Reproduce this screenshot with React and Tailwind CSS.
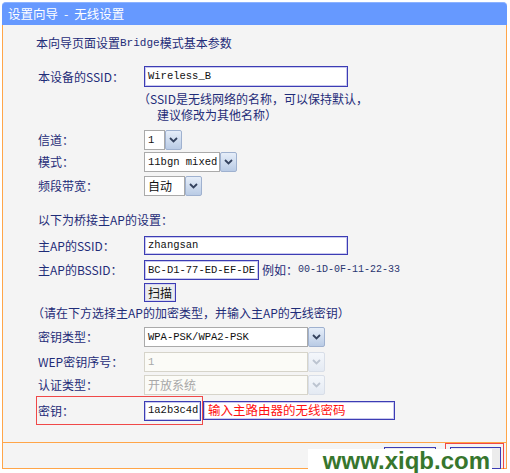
const CJK = "font-['Noto_Sans_CJK_SC',sans-serif]";
const MONO = "font-['Liberation_Mono','Noto_Sans_CJK_SC',monospace]";
const LBL = "w-[106px] shrink-0";

function Chevron({ disabled }) {
  return (
    <svg width="9" height="6" viewBox="0 0 9 6">
      <polyline
        points="1,1 4.5,4.5 8,1"
        fill="none"
        stroke={disabled ? "#bcc4d0" : "#34425e"}
        strokeWidth="1.8"
      />
    </svg>
  );
}

function Select({ className, value, disabled, mono }) {
  return (
    <div className={`flex h-[20px] ${className}`}>
      <div
        className={`flex-1 flex items-center pl-[3px] border ${
          disabled
            ? "border-[#d6d4ca] bg-[#fbfbf7] text-[#a8a8a8]"
            : "border-[#aaaaaa] bg-white text-[#111]"
        } ${mono ? `${MONO} text-[10.5px]` : `${CJK} text-[12px]`}`}
      >
        {value}
      </div>
      <div
        className={`w-[17px] flex items-center justify-center rounded-[2px] border ${
          disabled
            ? "border-[#d8dee8] bg-gradient-to-b from-[#f4f7fb] to-[#e4eaf3]"
            : "border-[#9fb1cf] bg-gradient-to-b from-[#e6eef9] to-[#b9cbe5]"
        }`}
      >
        <Chevron disabled={disabled} />
      </div>
    </div>
  );
}

function Input({ className, value }) {
  return (
    <div
      className={`flex items-center pl-[3px] bg-white border border-[#3c3cb4] shadow-[inset_0_0_0_1px_#c9c9ee] ${MONO} text-[10.5px] text-[#111] ${className}`}
    >
      {value}
    </div>
  );
}

function Row({ label, className, children }) {
  return (
    <div className={`flex items-center pl-[35px] ${className}`}>
      <div className={LBL}>{label}</div>
      {children}
    </div>
  );
}

export default function App() {
  return (
    <div className={`relative w-[510px] h-[473px] bg-white ${CJK} text-[12px] leading-none text-[#1f2c78]`}>
      <div className="ml-[2px] w-[505px] pt-[2px]">
        <div className="h-[23px] rounded-t-[4px] bg-[#6699ff] border-t border-[#8cb2ff] flex items-center pl-[6px] text-white text-[12.5px]">
          设置向导<span className="mx-[6px]">-</span>无线设置
        </div>
        <div className="bg-[#f4f4f4] border-x border-[#ffa548]">
          <div className="border-b border-[#ffa548] pt-[8px] pb-[17px] flex flex-col">
            <div className="h-[20px] flex items-center pl-[33px]">
              本向导页面设置<span className={`${MONO} text-[11px]`}>Bridge</span>模式基本参数
            </div>
            <Row label="本设备的SSID：" className="h-[21px] mt-[13px]">
              <Input className="w-[204px] h-[21px]" value="Wireless_B" />
            </Row>
            <div className="h-[16px] mt-[4px] flex items-center pl-[135px]">
              （SSID是无线网络的名称，可以保持默认，
            </div>
            <div className="h-[16px] flex items-center pl-[154px]">建议修改为其他名称）</div>
            <Row label="信道：" className="h-[20px] mt-[7px]">
              <Select className="w-[38px]" value="1" mono />
            </Row>
            <Row label="模式：" className="h-[20px] mt-[2px]">
              <Select className="w-[93px]" value="11bgn mixed" mono />
            </Row>
            <Row label="频段带宽：" className="h-[20px] mt-[4px]">
              <Select className="w-[58px]" value="自动" />
            </Row>
            <div className="h-[20px] mt-[14px] flex items-center pl-[35px]">以下为桥接主AP的设置：</div>
            <Row label="主AP的SSID：" className="h-[19px] mt-[6px]">
              <Input className="w-[204px] h-[19px]" value="zhangsan" />
            </Row>
            <Row label="主AP的BSSID：" className="h-[20px] mt-[5px]">
              <Input className="w-[115px] h-[20px]" value="BC-D1-77-ED-EF-DE" />
              <span className="ml-[3px]">例如：</span>
              <span className={`${MONO} text-[10px] text-[#2a3670]`}>00-1D-0F-11-22-33</span>
            </Row>
            <div className="h-[19px] mt-[3px] flex pl-[141px]">
              <div className="w-[32px] h-[19px] flex items-center justify-center bg-[#ececec] border border-[#3c3cb4] shadow-[inset_0_0_0_1px_#d6d6f0] text-[#111]">
                扫描
              </div>
            </div>
            <div className="h-[18px] mt-[2px] flex items-center pl-[29px]">
              （请在下方选择主AP的加密类型，并输入主AP的无线密钥）
            </div>
            <Row label="密钥类型：" className="h-[20px] mt-[5px]">
              <Select className="w-[181px]" value="WPA-PSK/WPA2-PSK" mono />
            </Row>
            <Row label="WEP密钥序号：" className="h-[20px] mt-[5px]">
              <Select className="w-[181px]" value="1" mono disabled />
            </Row>
            <Row label="认证类型：" className="h-[20px] mt-[3px]">
              <Select className="w-[181px]" value="开放系统" disabled />
            </Row>
            <div className="h-[29px] mt-[1px] flex items-center pl-[33px]">
              <div className="w-[167px] h-[29px] border border-[#f04848] flex items-center pl-[1px]">
                <div className={LBL}>密钥：</div>
                <Input className="w-[57px] h-[20px]" value="1a2b3c4d" />
              </div>
              <div className="w-[192px] h-[19px] bg-white border border-[#3c3cb4] shadow-[inset_0_0_0_1px_#c9c9ee] flex items-center pl-[4px] text-[#ff1010] text-[12.5px]">
                输入主路由器的无线密码
              </div>
            </div>
          </div>
          <div className="h-[26px] border-b border-[#ffa548] flex justify-end items-start pr-[2px]">
            <div className="mt-[4px] w-[52px] h-[22px] border border-[#3c3cb4] bg-[#ececec]" />
            <div className="ml-[9px] w-[59px] h-[26px] border border-[#f04848] border-b-0 pt-[3px] pl-[4px]">
              <div className="w-[51px] h-[22px] border border-[#3c3cb4] bg-[#ececec]" />
            </div>
          </div>
        </div>
      </div>
      <div className="absolute left-[308px] bottom-0 w-[184px] h-[24px] bg-white flex items-end justify-end pr-[2px]">
        <span className="font-['Liberation_Sans',sans-serif] font-bold text-[24px] leading-[24px] text-[#37762d]">
          www.xiqb.com
        </span>
      </div>
    </div>
  );
}
